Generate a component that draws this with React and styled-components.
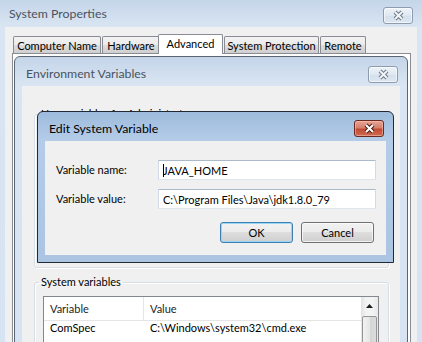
import styled, { createGlobalStyle } from "styled-components";

const Global = createGlobalStyle`
  html, body { margin: 0; padding: 0; }
  body {
    font-family: "Segoe UI", Lato, "Liberation Sans", sans-serif;
    font-size: 11px;
    color: #000;
  }
`;

// fundo da area de trabalho
const Desktop = styled.div`
  position: relative;
  width: 422px;
  height: 342px;
  overflow: hidden;
  background: #e9eff7;
`;

// janela com moldura estilo Windows 7 basic
const Win = styled.div`
  position: absolute;
  left: ${(p) => p.$x}px;
  top: ${(p) => p.$y}px;
  width: ${(p) => p.$w}px;
  height: ${(p) => p.$h}px;
  box-sizing: border-box;
  display: flex;
  flex-direction: column;
  padding: 0 7px 7px;
  border: 1px solid ${(p) => (p.$active ? "#202a36" : "#5c6672")};
  border-radius: 6px 6px 0 0;
  background: ${(p) =>
    p.$active
      ? "linear-gradient(#9ebbdd, #b4cce7 28px, #aac4e2)"
      : "linear-gradient(#c4d5e9, #d9e5f2 28px, #d6e3f2)"};
`;

const TitleBar = styled.div`
  flex: none;
  height: ${(p) => p.$h}px;
  display: flex;
  justify-content: space-between;
  align-items: flex-start;
  padding: 0 ${(p) => p.$pr}px 0 4px;
`;

const Title = styled.span`
  margin-top: ${(p) => p.$top}px;
  line-height: 16px;
  font-size: 12.3px;
  color: ${(p) => (p.$active ? "#000" : "#4a5360")};
`;

const CloseBtn = styled.div`
  margin-top: ${(p) => p.$top}px;
  width: 30px;
  height: 17px;
  box-sizing: border-box;
  border-radius: 3px;
  display: flex;
  align-items: center;
  justify-content: center;
  border: 1px solid ${(p) => (p.$active ? "#6a2a20" : "#8d9cae")};
  background: ${(p) =>
    p.$active
      ? "linear-gradient(#e6a594, #d6806b 45%, #c24a33 55%, #cd6c52)"
      : "linear-gradient(#eef3f9, #dfe8f2 50%, #d5e0ed 55%, #dde7f2)"};
  box-shadow: inset 0 0 0 1px ${(p) => (p.$active ? "rgba(255,200,190,0.5)" : "rgba(255,255,255,0.6)")};
`;

function CloseIcon({ active }) {
  return (
    <svg width="13" height="11" viewBox="0 0 13 11">
      <path d="M3 2 L10 9 M10 2 L3 9" stroke={active ? "#4a1a12" : "#6e7a88"} strokeWidth="4" />
      <path d="M3 2 L10 9 M10 2 L3 9" stroke={active ? "#fff" : "#f2f4f7"} strokeWidth="2" />
    </svg>
  );
}

const Client = styled.div`
  flex: 1;
  background: #f0f0f0;
  display: flex;
  flex-direction: column;
  padding: ${(p) => p.$pad || "0"};
`;

// abas do System Properties
const TabRow = styled.div`
  display: flex;
  align-items: flex-end;
  padding: 7px 0 0 8px;
`;

const Tab = styled.div`
  width: ${(p) => p.$w}px;
  box-sizing: border-box;
  display: flex;
  align-items: center;
  justify-content: center;
  white-space: nowrap;
  border: 1px solid #898c95;
  border-bottom: none;
  border-radius: 2px 2px 0 0;
  ${(p) =>
    p.$selected
      ? `
    height: 20px;
    margin: 0 0 -1px -2px;
    background: #fff;
    position: relative;
    z-index: 1;
    padding-bottom: 2px;
  `
      : `
    height: 17px;
    margin-left: ${p.$first ? 0 : 1}px;
    background: linear-gradient(#f2f2f2, #ebebeb 50%, #dddddd 50%, #cfcfcf);
    padding-top: 1px;
  `}
`;

const TabPane = styled.div`
  flex: 1;
  margin: 0 6px 0 7px;
  border: 1px solid #898c95;
  background: #fff;
`;

// caixa de grupo
const Group = styled.fieldset`
  margin: ${(p) => p.$mt}px 0 0;
  padding: 6px 9px 10px 8px;
  border: 1px solid #d5dfe5;
  border-radius: 3px;
  box-shadow: inset 1px 1px 0 #fff, 1px 1px 0 #fff;
  height: ${(p) => (p.$h ? `${p.$h}px` : "auto")};
  box-sizing: border-box;
  min-width: 0;
`;

const Legend = styled.legend`
  padding: 0 2px;
  margin-left: -4px;
  line-height: 16px;
  color: #000;
`;

const ListView = styled.div`
  display: flex;
  border: 1px solid #828790;
  background: #fff;
  height: 60px;
`;

const Table = styled.div`
  flex: 1;
  display: grid;
  grid-template-columns: 100px 1fr;
  grid-auto-rows: 20px;
  align-content: start;
`;

const HeadCell = styled.div`
  height: 23px;
  display: flex;
  align-items: center;
  padding-left: 6px;
  border-bottom: 1px solid #e5e5e5;
  border-right: ${(p) => (p.$sep ? "1px solid #e5e5e5" : "none")};
  background: #fff;
  color: #1e1e1e;
`;

const Cell = styled.div`
  display: flex;
  align-items: center;
  padding-left: 6px;
  height: 20px;
  white-space: nowrap;
`;

const ScrollBar = styled.div`
  width: 17px;
  flex: none;
  display: flex;
  flex-direction: column;
  align-items: center;
  background: linear-gradient(90deg, #e3e3e3, #f3f3f3 30%, #f3f3f3 70%, #e8e8e8);
`;

const ScrollArrow = styled.div`
  height: 17px;
  width: 17px;
  display: flex;
  align-items: center;
  justify-content: center;
`;

const Thumb = styled.div`
  margin-top: 2px;
  width: 15px;
  height: 30px;
  box-sizing: border-box;
  border: 1px solid #959595;
  border-radius: 2px;
  background: linear-gradient(90deg, #f2f2f2, #e6e6e6 50%, #d4d4d4 51%, #dcdcdc);
`;

// formulario do Edit System Variable
const Form = styled.div`
  display: grid;
  grid-template-columns: 102px 218px;
  row-gap: 9px;
  align-items: center;
  padding: 19px 10px 0 11px;
`;

const Label = styled.span`
  line-height: 16px;
`;

const Input = styled.div`
  height: 20px;
  box-sizing: border-box;
  display: flex;
  align-items: center;
  padding-left: 4px;
  background: #fff;
  border: 1px solid;
  border-color: #abb9cb #d0dbe7 #dde5ee #d0dbe7;
  border-radius: 1px;
  white-space: nowrap;
`;

const Caret = styled.span`
  display: inline-block;
  width: 1px;
  height: 13px;
  background: #000;
  margin-right: -1px;
`;

const ButtonRow = styled.div`
  display: flex;
  justify-content: flex-end;
  gap: 8px;
  padding: 13px 12px 0 0;
`;

const Button = styled.div`
  width: 73px;
  height: 21px;
  box-sizing: border-box;
  display: flex;
  align-items: center;
  justify-content: center;
  border-radius: 3px;
  border: 1px solid ${(p) => (p.$default ? "#3c7fb1" : "#707070")};
  background: linear-gradient(#f2f2f2, #ebebeb 50%, #dddddd 50%, #cfcfcf);
  box-shadow: inset 0 0 0 1px ${(p) => (p.$default ? "#9bd5f6" : "rgba(255,255,255,0.7)")};
`;

export default function App() {
  return (
    <Desktop>
      <Global />

      {/* System Properties */}
      <Win $x={-3} $y={-2} $w={428} $h={360}>
        <TitleBar $h={28} $pr={4}>
          <Title $top={7}>System Properties</Title>
          <CloseBtn $top={8}>
            <CloseIcon />
          </CloseBtn>
        </TitleBar>
        <Client>
          <TabRow>
            <Tab $w={88} $first>Computer Name</Tab>
            <Tab $w={58}>Hardware</Tab>
            <Tab $w={65} $selected>Advanced</Tab>
            <Tab $w={95}>System Protection</Tab>
            <Tab $w={46}>Remote</Tab>
          </TabRow>
          <TabPane />
        </Client>
      </Win>

      {/* Environment Variables */}
      <Win $x={14} $y={56} $w={394} $h={320}>
        <TitleBar $h={29} $pr={2}>
          <Title $top={9}>Environment Variables</Title>
          <CloseBtn $top={9}>
            <CloseIcon />
          </CloseBtn>
        </TitleBar>
        <Client $pad="0 11px 0 12px">
          <Group $mt={20} $h={162}>
            <Legend>User variables for Administrator</Legend>
          </Group>
          <Group $mt={6}>
            <Legend>System variables</Legend>
            <ListView>
              <Table>
                <HeadCell $sep>Variable</HeadCell>
                <HeadCell>Value</HeadCell>
                <Cell>ComSpec</Cell>
                <Cell>C:\Windows\system32\cmd.exe</Cell>
              </Table>
              <ScrollBar>
                <ScrollArrow>
                  <svg width="7" height="4" viewBox="0 0 7 4">
                    <path d="M0 4 L3.5 0 L7 4 Z" fill="#1e1e1e" />
                  </svg>
                </ScrollArrow>
                <Thumb />
              </ScrollBar>
            </ListView>
          </Group>
        </Client>
      </Win>

      {/* Edit System Variable */}
      <Win $x={37} $y={111} $w={357} $h={152} $active>
        <TitleBar $h={29} $pr={2}>
          <Title $top={9} $active>Edit System Variable</Title>
          <CloseBtn $top={8} $active>
            <CloseIcon active />
          </CloseBtn>
        </TitleBar>
        <Client>
          <Form>
            <Label>Variable name:</Label>
            <Input>
              <Caret />
              JAVA_HOME
            </Input>
            <Label>Variable value:</Label>
            <Input>C:\Program Files\Java\jdk1.8.0_79</Input>
          </Form>
          <ButtonRow>
            <Button $default>OK</Button>
            <Button>Cancel</Button>
          </ButtonRow>
        </Client>
      </Win>
    </Desktop>
  );
}
